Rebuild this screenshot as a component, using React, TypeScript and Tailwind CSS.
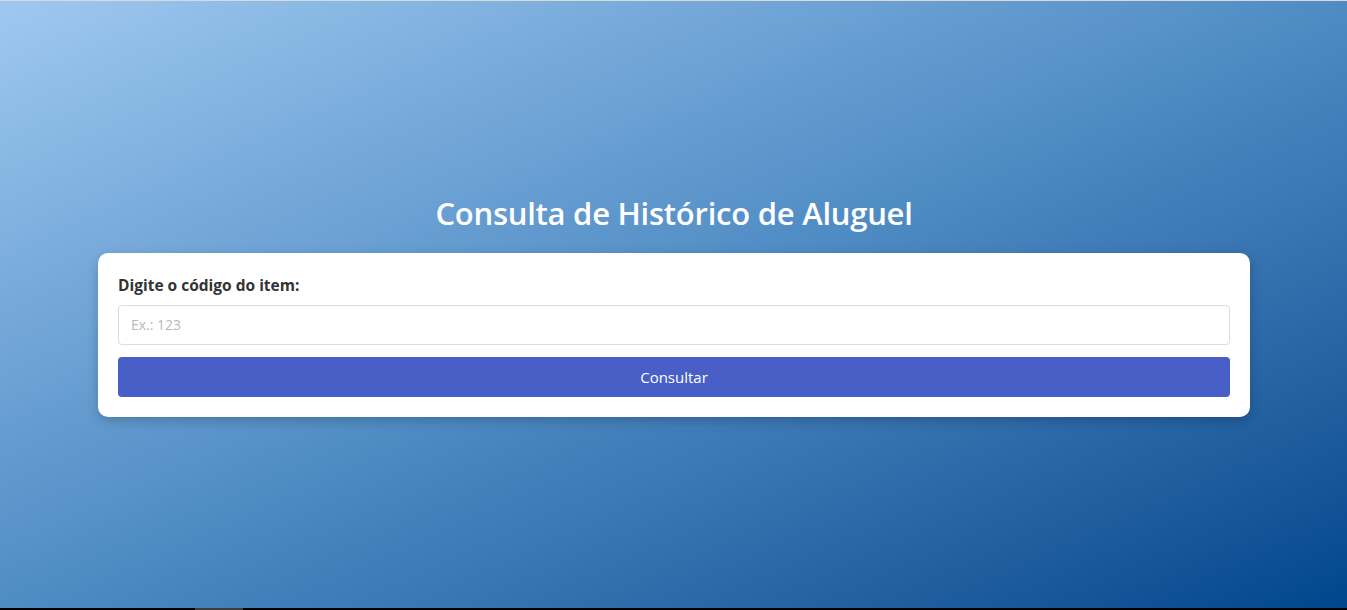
import React, { useState } from "react";

export default function App() {
  const [codigo, setCodigo] = useState("");

  return (
    <div className="bg-black font-['Open_Sans',_'Noto_Sans',_sans-serif]">
      <div className="h-[608px] border-t border-[#d9d9d9] bg-linear-to-br from-[#9ec8f0] via-[#4f8cc4] to-[#00468c] flex flex-col items-center justify-center pl-[98px] pr-[97px]">
        <h1 className="text-white text-[31px] font-semibold leading-[40px] mb-[20px] tracking-[-0.25px]">
          Consulta de Histórico de Aluguel
        </h1>
        <div className="w-full bg-white rounded-[10px] shadow-[0_4px_12px_rgba(0,0,0,0.2)] p-5">
          <label className="block text-[15.5px] font-bold text-[#333] leading-[24px] mb-2">
            Digite o código do item:
          </label>
          <input
            value={codigo}
            onChange={e => setCodigo(e.target.value)}
            placeholder="Ex.: 123"
            className="w-full h-10 px-3 border border-[#dcdcdc] rounded-[4px] text-[14px] text-[#333] placeholder:text-[#b8b8b8] outline-none"
          />
          <button className="mt-3 w-full h-10 pt-[1px] rounded-[4px] bg-[#485fc7] text-white text-[15px]">
            Consultar
          </button>
        </div>
      </div>
      <div className="h-[2px] flex">
        <div className="ml-[195px] w-[48px] bg-[#3c3c3c]" />
      </div>
    </div>
  );
}
